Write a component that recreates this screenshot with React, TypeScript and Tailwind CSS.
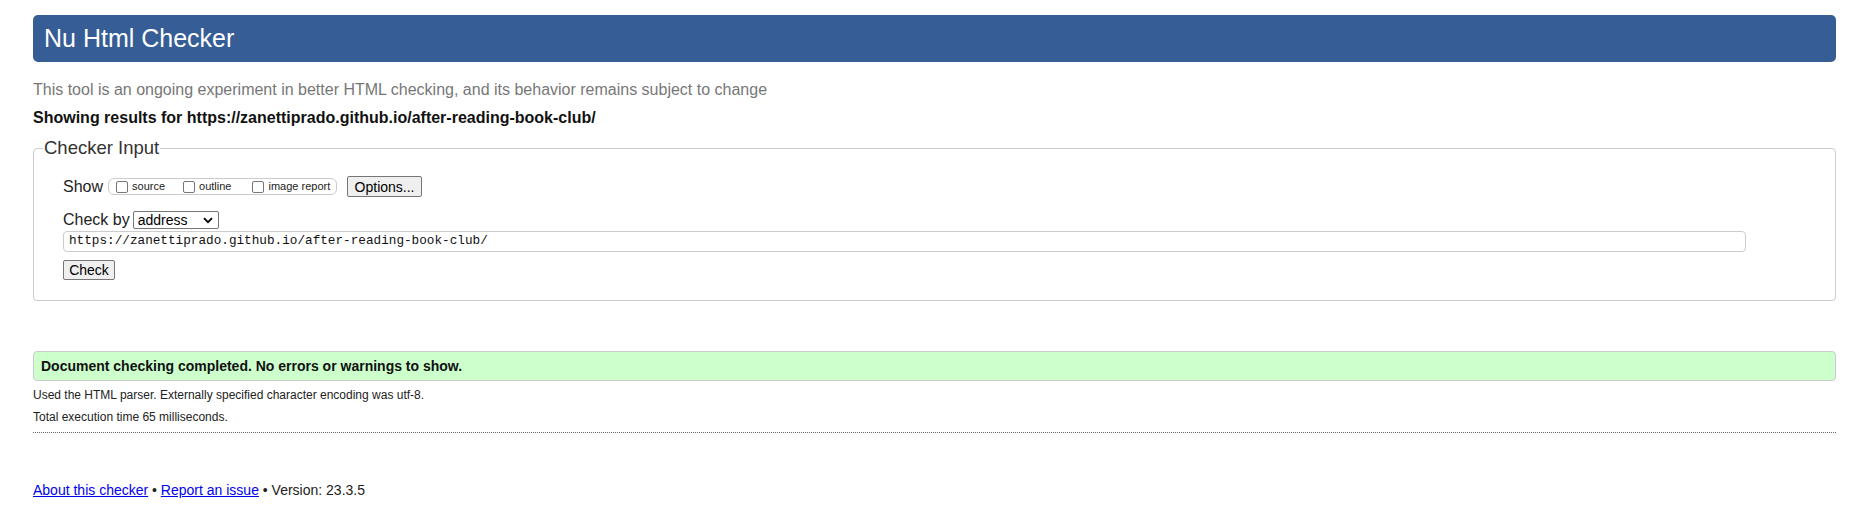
import React from 'react';

const sans = { fontFamily: '"Liberation Sans", Arial, sans-serif' };

function Checkbox({ label, className = '' }: { label: string; className?: string }) {
  return (
    <label className={'flex shrink-0 items-center whitespace-nowrap ' + className}>
      <span className="mr-[4px] inline-block h-[12px] w-[12px] rounded-[2px] border border-[#767676] bg-white" />
      <span className="text-[11px] leading-none text-[#222]">{label}</span>
    </label>
  );
}

export default function App() {
  return (
    <div className="min-h-[532px] w-full bg-white text-black" style={sans}>
      <div className="px-[33px] pt-[15px] pr-[31px]">
        {/* title bar */}
        <div className="flex h-[47px] items-center rounded-[5px] bg-[#365d95] px-[11px]">
          <h1 className="text-[25px] leading-none text-white">Nu Html Checker</h1>
        </div>

        <p className="mt-[20px] text-[16px] leading-none text-[#777]">
          This tool is an ongoing experiment in better HTML checking, and its behavior remains subject to change
        </p>
        <p className="mt-[12px] text-[16px] font-bold leading-none text-[#111]">
          Showing results for https://zanettiprado.github.io/after-reading-book-club/
        </p>

        {/* checker input */}
        <div className="relative mt-[22px] rounded-[4px] border border-[#ccc] px-[29px] pb-[20px] pt-[27px]">
          <span className="absolute left-[9px] top-[-10px] bg-white px-[1px] text-[18.5px] leading-none text-[#333]">
            Checker Input
          </span>

          <div className="flex items-center">
            <span className="text-[16px] leading-none text-[#222]">Show</span>
            <div className="ml-[5px] flex h-[17px] w-[229px] items-center rounded-[6px] border border-[#ccc] pl-[7px]">
              <Checkbox label="source" />
              <Checkbox label="outline" className="ml-[18px]" />
              <Checkbox label="image report" className="ml-[21px]" />
            </div>
            <button className="ml-[10px] h-[21px] w-[75px] rounded-[2px] border border-[#767676] bg-[#efefef] text-[14px] leading-none text-black">
              Options...
            </button>
          </div>

          <div className="mt-[14px] flex items-center">
            <span className="text-[16px] leading-none text-[#222]">Check by</span>
            <div className="ml-[3px] flex h-[18px] w-[86px] items-center justify-between rounded-[2px] border border-[#767676] bg-white pl-[4px] pr-[5px]">
              <span className="text-[14px] leading-none text-black">address</span>
              <svg width="10" height="7" viewBox="0 0 10 7">
                <path d="M1 1.2 L5 5.2 L9 1.2" fill="none" stroke="#000" strokeWidth="1.8" />
              </svg>
            </div>
          </div>

          <div className="mt-[2px] flex h-[21px] w-[1683px] items-center rounded-[4px] border border-[#ccc] px-[5px]">
            <span className="text-[12.7px] leading-none text-[#111]" style={{ fontFamily: '"Liberation Mono", "DejaVu Sans Mono", monospace' }}>
              https://zanettiprado.github.io/after-reading-book-club/
            </span>
          </div>

          <button className="mt-[8px] block h-[20px] w-[52px] rounded-[2px] border border-[#767676] bg-[#efefef] text-[14px] leading-none text-black">
            Check
          </button>
        </div>

        {/* result */}
        <div className="mt-[50px] flex h-[30px] items-center rounded-[4px] border border-[#ccc] bg-[#ccffcc] px-[7px]">
          <span className="text-[14px] font-bold leading-none text-[#111]">
            Document checking completed. No errors or warnings to show.
          </span>
        </div>
        <p className="mt-[8px] text-[12px] leading-none text-[#222]">
          Used the HTML parser. Externally specified character encoding was utf-8.
        </p>
        <p className="mt-[10px] text-[12px] leading-none text-[#222]">Total execution time 65 milliseconds.</p>
        <div className="mt-[9px] border-t border-dotted border-[#666]" />

        {/* footer */}
        <p className="mt-[50px] text-[14px] leading-none text-[#222]">
          <a className="text-[#0000ee] underline">About this checker</a> •{' '}
          <a className="text-[#0000ee] underline">Report an issue</a> • Version: 23.3.5
        </p>
      </div>
    </div>
  );
}
